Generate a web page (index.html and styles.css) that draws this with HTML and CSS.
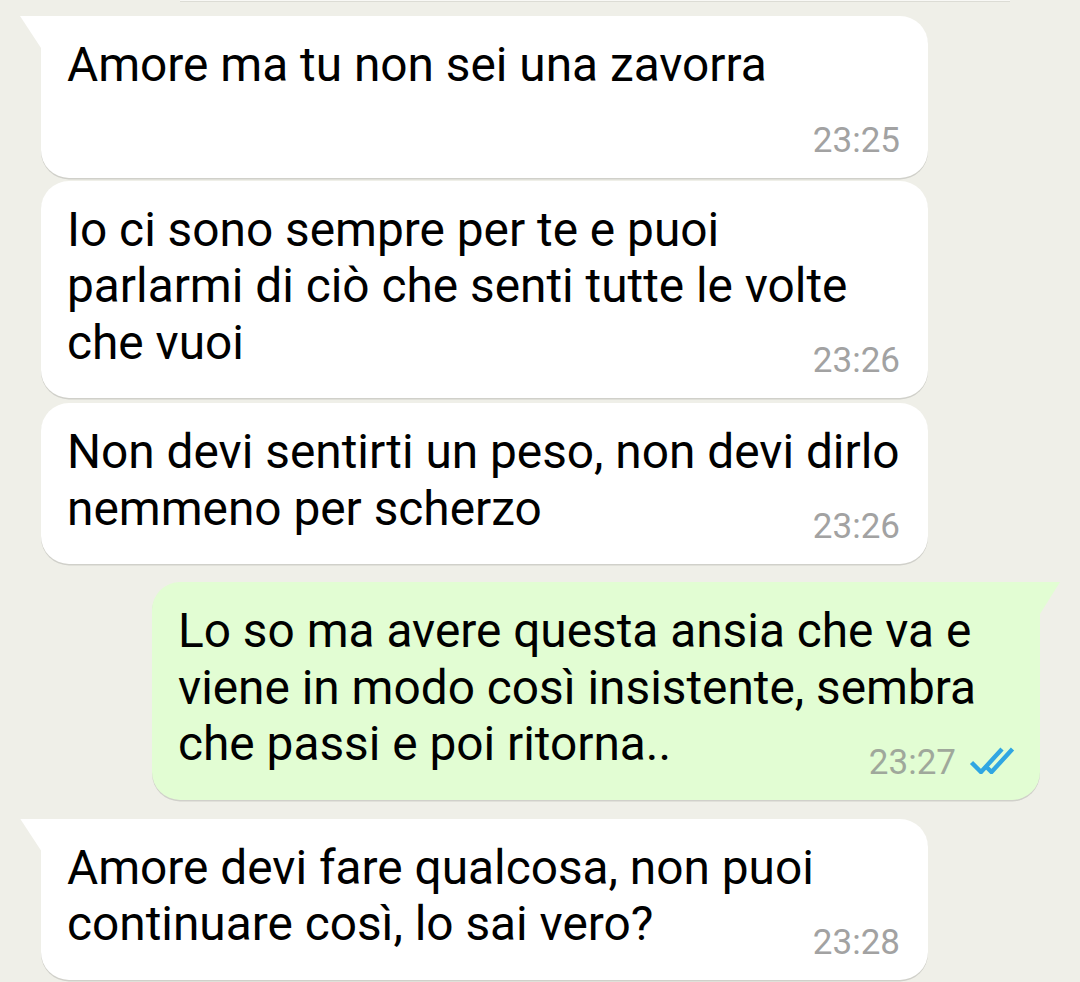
FILE: index.html
```html
<!DOCTYPE html>
<html lang="it">
<head>
<meta charset="utf-8">
<title>Chat</title>
<link rel="stylesheet" href="styles.css">
</head>
<body>
<div class="chat">
  <div class="prev"></div>

  <div class="row in first">
    <div class="bubble tail-in">
      <div class="msg-text">Amore ma tu non sei una zavorra</div>
      <div class="meta own-line"><span class="time">23:25</span></div>
    </div>
  </div>

  <div class="row in cont">
    <div class="bubble">
      <div class="msg-text">Io ci sono sempre per te e puoi<br>parlarmi di ciò che senti tutte le volte<br>che vuoi</div>
      <div class="meta"><span class="time">23:26</span></div>
    </div>
  </div>

  <div class="row in cont2">
    <div class="bubble">
      <div class="msg-text">Non devi sentirti un peso, non devi dirlo<br>nemmeno per scherzo</div>
      <div class="meta"><span class="time">23:26</span></div>
    </div>
  </div>

  <div class="row out">
    <div class="bubble green tail-out">
      <div class="msg-text">Lo so ma avere questa ansia che va e<br>viene in modo così insistente, sembra<br>che passi e poi ritorna..</div>
      <div class="meta"><span class="time">23:27</span>
        <svg class="ticks" width="46" height="28" viewBox="0 0 46 28" aria-hidden="true">
          <path d="M2.5 16.5 L12 26 L33 3" fill="none" stroke="#30a6e2" stroke-width="4.4" stroke-linejoin="miter"/>
          <path d="M18 21.5 L22.5 26 L43.5 3" fill="none" stroke="#30a6e2" stroke-width="4.4" stroke-linejoin="miter"/>
        </svg>
      </div>
    </div>
  </div>

  <div class="row in last">
    <div class="bubble tail-in">
      <div class="msg-text">Amore devi fare qualcosa, non puoi<br>continuare così, lo sai vero?</div>
      <div class="meta"><span class="time">23:28</span></div>
    </div>
  </div>
</div>
</body>
</html>
```

FILE: styles.css
```css
html, body {
  margin: 0;
  padding: 0;
  background: #efefe8;
}

body {
  width: 1080px;
  height: 982px;
  overflow: hidden;
  font-family: Roboto, "Noto Sans", "Liberation Sans", sans-serif;
}

.chat {
  display: flex;
  flex-direction: column;
}

.prev {
  height: 1px;
  margin: 0 70px 0 180px;
  background: #f8f8f5;
  box-shadow: 0 1px 0 #dcdcd5;
}

.row {
  display: flex;
}

.row.in {
  padding-left: 41px;
}

.row.out {
  justify-content: flex-end;
  padding-right: 40px;
  margin-top: 18px;
}

.row.first {
  margin-top: 15px;
}

.row.cont {
  margin-top: 3px;
}

.row.cont2 {
  margin-top: 5px;
}

.row.last {
  margin-top: 19px;
}

.bubble {
  position: relative;
  box-sizing: border-box;
  width: 887px;
  padding: 21px 28px 17px 26px;
  background: #ffffff;
  border-radius: 28px;
  box-shadow: 0 1.5px 0.6px rgba(0, 0, 0, 0.13);
}

.bubble.green {
  width: 888px;
  padding-right: 25px;
  background: #e2fdd3;
}

.bubble.tail-in {
  border-top-left-radius: 0;
}

.bubble.tail-in::before {
  content: "";
  position: absolute;
  left: -21px;
  top: 0;
  width: 21px;
  height: 32px;
  background: #ffffff;
  clip-path: polygon(0 0, 100% 0, 100% 100%);
}

.bubble.tail-out {
  border-top-right-radius: 0;
}

.bubble.tail-out::after {
  content: "";
  position: absolute;
  right: -20px;
  top: 0;
  width: 20px;
  height: 32px;
  background: #e2fdd3;
  clip-path: polygon(0 0, 100% 0, 0 100%);
}

.msg-text {
  font-size: 47.8px;
  line-height: 56.5px;
  color: #000000;
  white-space: nowrap;
}

.meta {
  display: flex;
  justify-content: flex-end;
  align-items: flex-start;
  gap: 13px;
  height: 40px;
  margin-top: -30px;
  font-size: 35px;
  line-height: 40px;
}

.meta.own-line {
  margin-top: 27px;
}

.time {
  color: #a2a2a2;
}

.green .time {
  color: #9fa89b;
}

.ticks {
  margin-top: 3px;
  flex: none;
}
```
